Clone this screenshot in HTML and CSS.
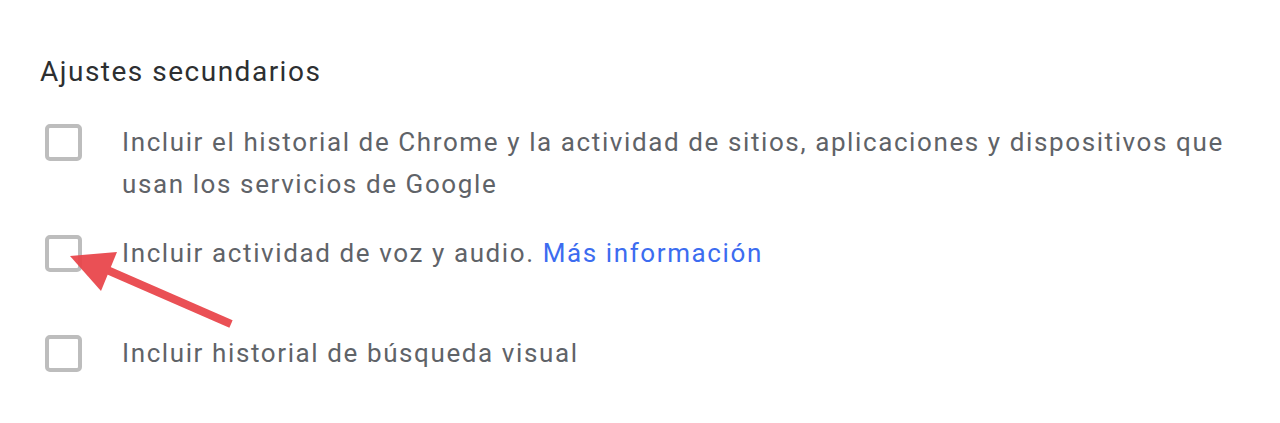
FILE: index.html
```html
<!DOCTYPE html>
<html lang="es">
<head>
    <meta charset="UTF-8">
    <meta name="viewport" content="width=device-width, initial-scale=1.0">
    <title>Ajustes secundarios</title>
    <link rel="stylesheet" href="styles.css">
</head>
<body>
    <div class="settings">
        <h2 class="settings-title">Ajustes secundarios</h2>

        <div class="option option-first">
            <span class="checkbox"></span>
            <p class="option-text">Incluir el historial de Chrome y la actividad de sitios, aplicaciones y dispositivos que usan los servicios de Google</p>
        </div>

        <div class="option option-second">
            <span class="checkbox"></span>
            <p class="option-text">Incluir actividad de voz y audio. <a href="#" class="link">Más información</a></p>
        </div>

        <div class="option option-third">
            <span class="checkbox"></span>
            <p class="option-text">Incluir historial de búsqueda visual</p>
        </div>
    </div>

    <!-- annotation arrow drawn over the page -->
    <svg class="arrow" width="1280" height="423" viewBox="0 0 1280 423">
        <line x1="231" y1="324" x2="98" y2="266" stroke="#e9474c" stroke-width="8" stroke-linecap="butt"/>
        <polygon points="70,256 117,252 101,291" fill="#e9474c"/>
    </svg>
</body>
</html>
```

FILE: styles.css
```css
body {
    margin: 0;
    background-color: #fff;
    font-family: Roboto, "Noto Sans", Arial, sans-serif;
}

.settings {
    padding: 50px 40px 0 40px;
}

.settings-title {
    margin: 0 0 27px 0;
    font-size: 28px;
    font-weight: 400;
    line-height: 44px;
    letter-spacing: 1.5px;
    color: #2d2f31;
}

.option {
    display: flex;
    align-items: flex-start;
}

.option-second {
    margin-top: 27px;
}

.option-third {
    margin-top: 58px;
}

.checkbox {
    flex: none;
    width: 29px;
    height: 29px;
    margin: 3px 40px 0 5px;
    border: 4px solid #bdbdbd;
    border-radius: 5px;
}

.option-text {
    max-width: 1130px;
    margin: 0;
    font-size: 26px;
    line-height: 42px;
    letter-spacing: 1.6px;
    color: #5f6368;
}

.link {
    color: #3c6cf0;
    text-decoration: none;
}

.arrow {
    position: absolute;
    top: 0;
    left: 0;
    pointer-events: none;
    opacity: 0.95;
}
```
